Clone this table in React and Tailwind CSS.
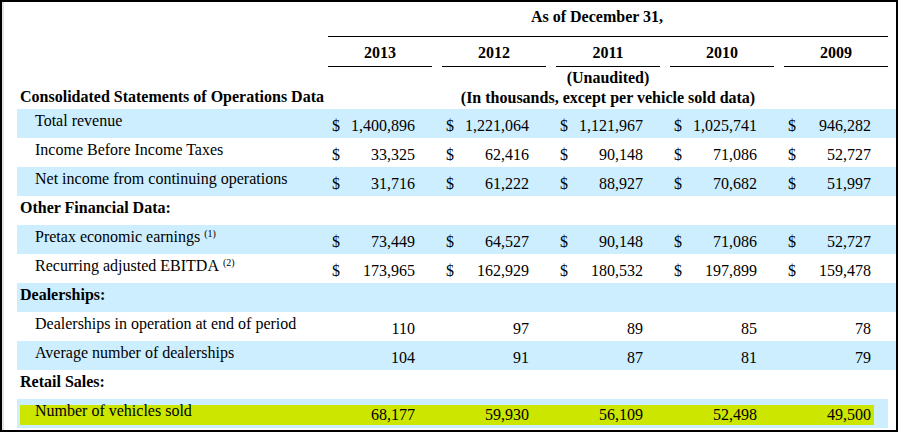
const years = ["2013", "2012", "2011", "2010", "2009"];

const rows = [
  { label: "Total revenue", blue: true, dollar: true, vals: ["1,400,896", "1,221,064", "1,121,967", "1,025,741", "946,282"] },
  { label: "Income Before Income Taxes", dollar: true, vals: ["33,325", "62,416", "90,148", "71,086", "52,727"] },
  { label: "Net income from continuing operations", blue: true, dollar: true, vals: ["31,716", "61,222", "88,927", "70,682", "51,997"] },
  { section: "Other Financial Data:" },
  { label: "Pretax economic earnings", note: "(1)", blue: true, dollar: true, vals: ["73,449", "64,527", "90,148", "71,086", "52,727"] },
  { label: "Recurring adjusted EBITDA", note: "(2)", dollar: true, vals: ["173,965", "162,929", "180,532", "197,899", "159,478"] },
  { section: "Dealerships:", blue: true },
  { label: "Dealerships in operation at end of period", vals: ["110", "97", "89", "85", "78"] },
  { label: "Average number of dealerships", blue: true, vals: ["104", "91", "87", "81", "79"] },
  { section: "Retail Sales:" },
];

const grid = "grid grid-cols-[301px_repeat(5,104px)] gap-x-[10px]";

const ValueCell = ({ v, dollar }) => (
  <div className="flex justify-between pl-[4px] pr-[17px] pt-[8px]">
    <span>{dollar ? "$" : ""}</span>
    <span>{v}</span>
  </div>
);

const Row = ({ row }) => {
  const bg = row.blue ? "bg-[#cceeff]" : "bg-white";
  if (row.section) {
    return (
      <div className={`h-[29px] ${bg} pl-[3px] pt-[3px] font-bold`}>{row.section}</div>
    );
  }
  return (
    <div className={`${grid} h-[29px] ${bg}`}>
      <div className="pl-[18px] pt-[3px] whitespace-nowrap">
        {row.label}
        {row.note && <sup className="text-[10px] ml-[4px]">{row.note}</sup>}
      </div>
      {row.vals.map((v, i) => (
        <ValueCell key={i} v={v} dollar={row.dollar} />
      ))}
    </div>
  );
};

export default function App() {
  const sold = ["68,177", "59,930", "56,109", "52,498", "49,500"];
  return (
    <div className="w-[899px] h-[433px] bg-white">
      <div
        className="w-[898px] h-[432px] border-2 border-black bg-white shadow-[inset_2px_0_0_#e4e4e4] text-[16px] leading-[18px] text-black"
        style={{ fontFamily: '"Liberation Serif", "Times New Roman", serif' }}
      >
        <div className="pl-[15px]">
          {/* header */}
          <div className={grid}>
            <div />
            <div className="col-span-5 border-b border-black pt-[6px] pb-[10px] pr-[22px] text-center font-bold">
              As of December 31,
            </div>
          </div>
          <div className={grid}>
            <div />
            {years.map((y) => (
              <div key={y} className="border-b border-black pt-[7px] pb-[4px] text-center font-bold">
                {y}
              </div>
            ))}
          </div>
          <div className={`${grid} h-[42px] items-end font-bold leading-[20px]`}>
            <div className="pl-[3px] pb-[2px] whitespace-nowrap">Consolidated Statements of Operations Data</div>
            <div />
            <div className="col-span-3 pb-[1px] text-center whitespace-nowrap">
              <div>(Unaudited)</div>
              <div>(In thousands, except per vehicle sold data)</div>
            </div>
            <div />
          </div>

          {/* body */}
          {rows.map((r, i) => (
            <Row key={i} row={r} />
          ))}
          <div className="h-[29px] bg-[#cceeff] pt-[6px] w-[871px]">
            <div className="ml-[3px] w-[854px] h-[20px] bg-[#cce600]">
              <div className="grid grid-cols-[298px_repeat(5,104px)] gap-x-[10px]">
                <div className="pl-[15px] -mt-[3px]">Number of vehicles sold</div>
                {sold.map((v, i) => (
                  <div key={i} className="text-right pr-[17px] mt-[1px]">
                    {v}
                  </div>
                ))}
              </div>
            </div>
          </div>
        </div>
      </div>
    </div>
  );
}
